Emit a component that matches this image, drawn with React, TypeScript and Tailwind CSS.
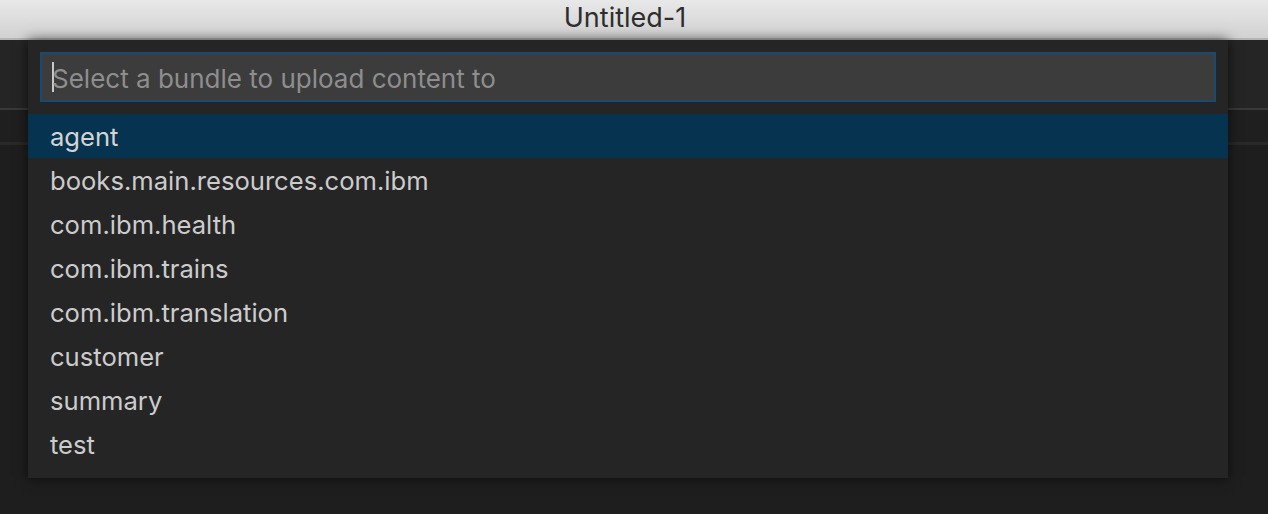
const bundles = [
  "agent",
  "books.main.resources.com.ibm",
  "com.ibm.health",
  "com.ibm.trains",
  "com.ibm.translation",
  "customer",
  "summary",
  "test",
];

const QuickPick = () => {
  return (
    <div className="absolute left-[28px] top-0 w-[1200px] bg-[#252526] pt-[12px] pb-[12px] shadow-[0_0_12px_rgba(0,0,0,0.65)]">
      <div className="mx-[12px] h-[50px] border-2 border-[#1b4a70] bg-[#3c3c3c] flex items-center pl-[10px]">
        <span className="w-[2px] h-[30px] bg-[#c8c8c8] mr-[-2px]" />
        <span className="text-[26px] text-[#8e8e8e] mt-[2px]">Select a bundle to upload content to</span>
      </div>
      <ul className="mt-[12px]">
        {bundles.map((name, i) => (
          <li
            key={name}
            className={
              i === 0
                ? "h-[44px] flex items-center pl-[22px] text-[25.6px] text-[#d4d4d4] bg-[#06334f]"
                : "h-[44px] flex items-center pl-[22px] text-[25.6px] text-[#cccccc]"
            }
          >
            <span className="mt-[2px]">{name}</span>
          </li>
        ))}
      </ul>
    </div>
  );
};

export default function App() {
  return (
    <div className="w-full h-[514px] flex flex-col bg-[#1e1e1e] overflow-hidden font-['Inter','Noto_Sans',sans-serif]">
      <div className="h-[40px] shrink-0 flex items-center justify-center pr-[18px] bg-gradient-to-b from-[#e8e8e8] to-[#d2d2d2] border-b-2 border-[#b4b4b4]">
        <span className="text-[27px] text-[#2e2e2e] mt-[-1px]">Untitled-1</span>
      </div>
      <div className="relative flex-1 flex flex-col">
        <div className="h-[70px] bg-[#252526] border-b-2 border-[#393939]" />
        <div className="h-[35px] bg-[#1f1f1f] border-b-[3px] border-[#292929]" />
        <div className="flex-1 bg-[#1e1e1e]" />
        <QuickPick />
      </div>
    </div>
  );
}
